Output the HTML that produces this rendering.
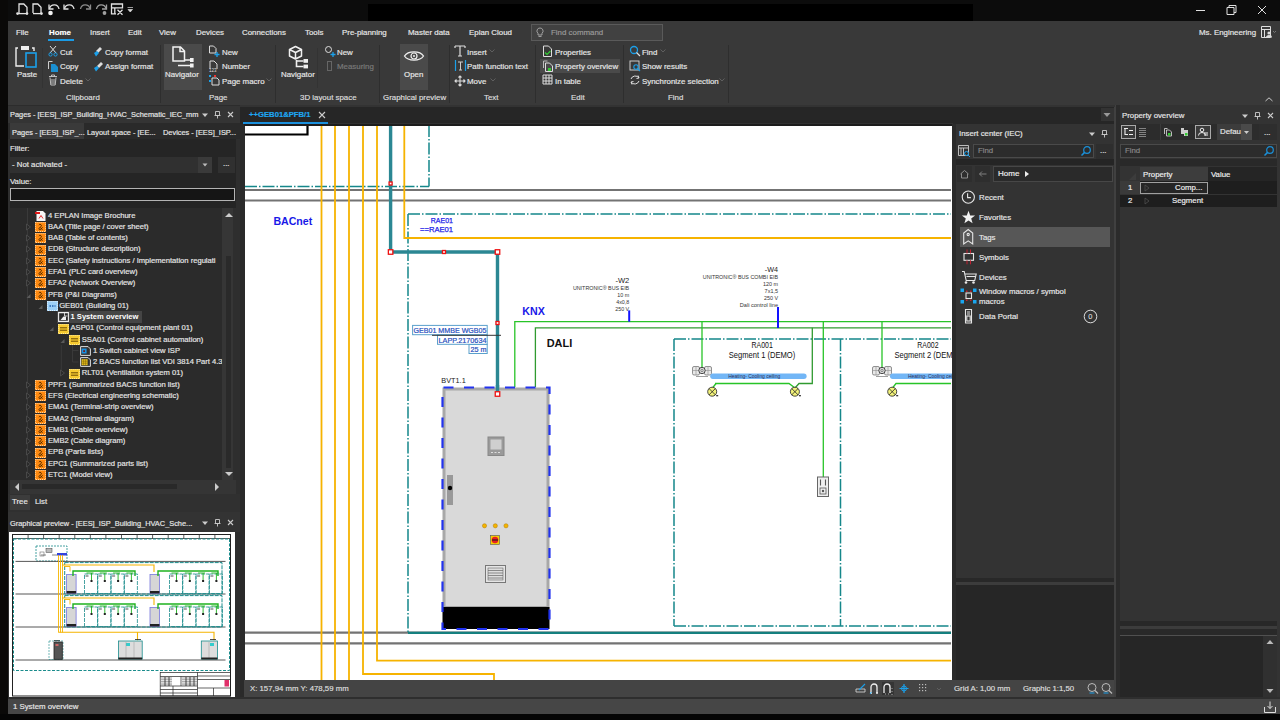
<!DOCTYPE html>
<html><head><meta charset="utf-8">
<style>
*{margin:0;padding:0;box-sizing:border-box}
html,body{width:1280px;height:720px;overflow:hidden;background:#0c0c0c;font-family:"Liberation Sans",sans-serif;font-size:8px;color:#e6e6e6}
.a{position:absolute}
.t{position:absolute;white-space:nowrap;line-height:10px;font-size:7.8px;-webkit-text-stroke:0.18px currentColor}
.tr{font-size:7.9px}
</style></head><body>
<!-- title bar -->
<div class="a" style="left:0;top:0;width:8px;height:720px;background:#0a0908"></div>
<div class="a" style="left:368px;top:4px;width:605px;height:17px;background:#000"></div>
<!-- ribbon -->
<div class="a" id="ribbon" style="left:8px;top:21px;width:1272px;height:84px;background:#393939"></div>
<div class="a" style="left:8px;top:105px;width:1272px;height:592px;background:#2a2a2a"></div>

<!-- title bar icons -->
<svg class="a" style="left:0;top:0" width="1280" height="21" viewBox="0 0 1280 21">
<g fill="none" stroke="#e2e2e2" stroke-width="1.3">
<path d="M19 13V4h4.8l3.2 3.2V13"/><path d="M17.5 13.6h9.5"/>
<path d="M33 13V4h4.8l3.2 3.2V13"/><path d="M33 13.6h8.5"/>
<path d="M49.5 8.5C51 3.5 58 3.5 59 9"/><path d="M49 4.5v4.5h4.5"/>
<path d="M64.5 8.5C66 3.5 73 3.5 74 9"/><path d="M64 4.5v4.5h4.5"/>
<path d="M90 8.5C88.5 3.5 81.5 3.5 80.5 9" stroke="#8c8c8c"/><path d="M90.5 4.5v4.5H86" stroke="#8c8c8c"/>
<path d="M106 8.5C104.5 3.5 97.5 3.5 96.5 9" stroke="#a0a0a0"/><path d="M106.5 4.5v4.5H102" stroke="#a0a0a0"/>
<path d="M111.5 4h11v3.8h-11zM111.5 7.8v6h4.5M114.8 7.8v6M117.5 9.8l5 5M122.5 9.8l-5 5"/>
</g>
<circle cx="17.5" cy="13.6" r="1.3" fill="#e2e2e2"/><circle cx="27" cy="13.6" r="1.3" fill="#e2e2e2"/><circle cx="41.5" cy="13.6" r="1.3" fill="#e2e2e2"/>
<circle cx="50.5" cy="13" r="2.3" fill="#f2f2f2"/><circle cx="104.5" cy="13" r="1.9" fill="#a0a0a0"/>
<path d="M127.5 7.5h5.5M128 9.5h4.5l-2.25 2.5z" fill="#d8d8d8" stroke="#d8d8d8" stroke-width=".7"/>
<g stroke="#e0e0e0" stroke-width="1" fill="none">
<path d="M1196 10.5h9"/><path d="M1227 7.5h7v7h-7z M1229 7.5v-2h7v7h-2"/><path d="M1258 6l8 8M1266 6l-8 8"/>
</g>
</svg>
<div class="a" style="left:8px;top:697px;width:1272px;height:1.5px;background:#2e2e2e"></div><div class="a" style="left:8px;top:698.5px;width:1272px;height:16px;background:#464646"></div>
<div class="a" style="left:0;top:714px;width:1280px;height:6px;background:#050505"></div>
<!-- ribbon menu -->
<div class="t tr" style="left:16px;top:28px">File</div>
<div class="t tr" style="left:49px;top:28px;font-weight:bold;color:#fff">Home</div>
<div class="a" style="left:48px;top:39px;width:26px;height:2px;background:#1a9be6"></div>
<div class="t tr" style="left:90px;top:28px">Insert</div>
<div class="t tr" style="left:128px;top:28px">Edit</div>
<div class="t tr" style="left:159px;top:28px">View</div>
<div class="t tr" style="left:196px;top:28px">Devices</div>
<div class="t tr" style="left:242px;top:28px">Connections</div>
<div class="t tr" style="left:305px;top:28px">Tools</div>
<div class="t tr" style="left:342px;top:28px">Pre-planning</div>
<div class="t tr" style="left:408px;top:28px">Master data</div>
<div class="t tr" style="left:469px;top:28px">Eplan Cloud</div>
<div class="a" style="left:531px;top:24px;width:132px;height:17px;background:#414141;border:1px solid #5a5a5a"></div>
<svg class="a" style="left:535px;top:27px" width="10" height="11"><path d="M5 1a3 3 0 0 1 2 5.3V8H3V6.3A3 3 0 0 1 5 1zM3.5 9.5h3" fill="none" stroke="#aaa" stroke-width="0.9"/></svg>
<div class="t tr" style="left:551px;top:28px;color:#9a9a9a">Find command</div>
<div class="t tr" style="left:1199px;top:28px">Ms. Engineering</div>
<svg class="a" style="left:1260px;top:25px" width="20" height="14"><path d="M1.5 1.5h9v11h-9zM1.5 4.5h9M4.5 4.5v8" fill="none" stroke="#ddd" stroke-width="1"/><circle cx="9" cy="8" r="1.6" fill="#ddd"/><path d="M6 12.5a3 2.5 0 0 1 6 0z" fill="#ddd"/><path d="M13 6l1.5 1.5L16 6" fill="none" stroke="#888" stroke-width=".8"/></svg>
<svg class="a" style="left:1264px;top:96px" width="10" height="7"><path d="M1.5 5L5 1.8 8.5 5" fill="none" stroke="#ccc" stroke-width="1"/></svg>
<!-- group separators -->
<div class="a" style="left:160px;top:45px;width:1px;height:58px;background:#2e2e2e"></div>
<div class="a" style="left:275px;top:45px;width:1px;height:58px;background:#2e2e2e"></div>
<div class="a" style="left:379px;top:45px;width:1px;height:58px;background:#2e2e2e"></div>
<div class="a" style="left:449px;top:45px;width:1px;height:58px;background:#2e2e2e"></div>
<div class="a" style="left:535px;top:45px;width:1px;height:58px;background:#2e2e2e"></div>
<div class="a" style="left:623px;top:45px;width:1px;height:58px;background:#2e2e2e"></div>
<div class="a" style="left:728px;top:45px;width:1px;height:58px;background:#2e2e2e"></div>
<div class="a" style="left:42px;top:48px;width:1px;height:40px;background:#333"></div>
<div class="a" style="left:317px;top:48px;width:1px;height:40px;background:#333"></div>
<!-- highlighted large buttons -->
<div class="a" style="left:164px;top:44px;width:38px;height:46px;background:#4a4a4a"></div>
<div class="a" style="left:400px;top:44px;width:28px;height:46px;background:#4a4a4a"></div>
<div class="a" style="left:540px;top:59px;width:80px;height:14px;background:#4a4a4a"></div>
<!-- clipboard -->
<svg class="a" style="left:14px;top:45px" width="26" height="25"><path d="M4 3H2v18h8" fill="none" stroke="#eee" stroke-width="1.4"/><path d="M7 1h8v4H7z" fill="#eee"/><path d="M18 3h2v3" fill="none" stroke="#eee" stroke-width="1.4"/><rect x="12" y="8" width="10" height="14" fill="none" stroke="#1ba0ea" stroke-width="1.6"/></svg>
<div class="t tr" style="left:17px;top:70px">Paste</div>
<svg class="a" style="left:48px;top:45px" width="10" height="12"><path d="M2 1l6 7M8 1L2 8" stroke="#ddd" stroke-width="1" fill="none"/><circle cx="2.5" cy="9.5" r="1.6" fill="none" stroke="#1ba0ea"/><circle cx="7.5" cy="9.5" r="1.6" fill="none" stroke="#1ba0ea"/></svg>
<div class="t tr" style="left:60px;top:47.5px">Cut</div>
<svg class="a" style="left:47px;top:60px" width="12" height="12"><path d="M1.5 9V1.5h4" fill="none" stroke="#ccc" stroke-width="1"/><path d="M4 4h4l3 3v5H4z" fill="#1a8fd0"/></svg>
<div class="t tr" style="left:60px;top:62px">Copy</div>
<svg class="a" style="left:48px;top:74px" width="10" height="12"><path d="M1 2.5h8M3.5 2.5V1h3v1.5M2 3.5l.8 7.5h4.4L8 3.5M4 5v5M6 5v5" fill="none" stroke="#ccc" stroke-width="0.9"/></svg>
<div class="t tr" style="left:60px;top:76.5px">Delete</div>
<svg class="a" style="left:85px;top:78px" width="6" height="4"><path d="M.5 .5L3 3 5.5 .5" fill="none" stroke="#6a6a6a" stroke-width=".8"/></svg>
<svg class="a" style="left:93px;top:46px" width="11" height="11"><path d="M3 5l4-4 2 2-4 4z" fill="#ddd"/><path d="M1 7l3-2 2 2-3 3.5z" fill="#1ba0ea"/></svg>
<div class="t tr" style="left:105px;top:47.5px">Copy format</div>
<svg class="a" style="left:93px;top:61px" width="11" height="11"><path d="M4 5l4-4 2 2-4 4z" fill="#ddd"/><path d="M1 7l3-2 2 2-3 3.5z" fill="#1ba0ea"/></svg>
<div class="t tr" style="left:105px;top:62px">Assign format</div>
<div class="t tr" style="left:66px;top:93px;color:#ddd">Clipboard</div>
<!-- page -->
<svg class="a" style="left:170px;top:45px" width="26" height="24"><path d="M3 2h7.5l4 4v10H3z M10 2v4.5h4.5" fill="none" stroke="#f2f2f2" stroke-width="1.5"/><path d="M15 15h5.5M8 20.5h12.5" stroke="#f2f2f2" stroke-width="1.4"/><rect x="20" y="13" width="3.6" height="4" fill="#f2f2f2"/><rect x="20" y="18.5" width="3.6" height="4" fill="#f2f2f2"/></svg>
<div class="t tr" style="left:165px;top:70px">Navigator</div>
<svg class="a" style="left:208px;top:45px" width="12" height="12"><path d="M1.5 1h4l2.5 2.5V8H1.5z" fill="none" stroke="#ddd" stroke-width="1"/><path d="M9 7v5M6.5 9.5h5" stroke="#1ba0ea" stroke-width="1.3"/></svg>
<div class="t tr" style="left:222px;top:47.5px">New</div>
<svg class="a" style="left:208px;top:60px" width="12" height="12"><path d="M2 9V1h4l3 3v5" fill="none" stroke="#ddd" stroke-width="1"/><text x="1" y="12" font-size="4.5" fill="#ddd" font-family="Liberation Sans">123</text></svg>
<div class="t tr" style="left:222px;top:62px">Number</div>
<svg class="a" style="left:208px;top:74px" width="12" height="12"><rect x="1" y="1" width="2" height="2" fill="#1ba0ea"/><rect x="6" y="1" width="2" height="2" fill="#e33"/><rect x="1" y="6" width="2" height="2" fill="#1ba0ea"/><path d="M4 4h5l2 2v5H4z" fill="none" stroke="#ddd" stroke-width="1"/></svg>
<div class="t tr" style="left:222px;top:76.5px">Page macro</div>
<svg class="a" style="left:266px;top:78px" width="6" height="4"><path d="M.5 .5L3 3 5.5 .5" fill="none" stroke="#6a6a6a" stroke-width=".8"/></svg>
<div class="t tr" style="left:209px;top:93px;color:#ddd">Page</div>
<!-- 3d layout -->
<svg class="a" style="left:287px;top:45px" width="24" height="24"><path d="M8.5 1.5l6 3v6.5l-6 3-6-3V4.5z M2.5 4.5l6 3 6-3M8.5 7.5v6.5" fill="none" stroke="#f0f0f0" stroke-width="1.5" stroke-linejoin="round"/><path d="M9.5 16h7M9.5 15v6.5h7" fill="none" stroke="#f0f0f0" stroke-width="1.6"/><rect x="16.5" y="14" width="4.5" height="3.8" fill="#f0f0f0"/><rect x="16.5" y="19.6" width="4.5" height="3.8" fill="#f0f0f0"/></svg>
<div class="t tr" style="left:281px;top:70px">Navigator</div>
<svg class="a" style="left:324px;top:45px" width="12" height="12"><circle cx="4.5" cy="4.5" r="3" fill="none" stroke="#ddd" stroke-width="1"/><path d="M9 7v5M6.5 9.5h5" stroke="#1ba0ea" stroke-width="1.3"/></svg>
<div class="t tr" style="left:337px;top:47.5px">New</div>
<svg class="a" style="left:326px;top:60px" width="8" height="12"><rect x="1.5" y="1.5" width="4" height="9" fill="none" stroke="#666" stroke-width="1"/></svg>
<div class="t tr" style="left:337px;top:62px;color:#7a7a7a">Measuring</div>
<div class="t tr" style="left:300px;top:93px;color:#ddd">3D layout space</div>
<!-- graphical preview -->
<svg class="a" style="left:403px;top:48px" width="22" height="16"><path d="M1.5 8C5 2.5 17 2.5 20.5 8 17 13.5 5 13.5 1.5 8z" fill="none" stroke="#eee" stroke-width="1.3"/><circle cx="11" cy="8" r="3" fill="none" stroke="#eee" stroke-width="1.2"/><circle cx="11" cy="8" r="1" fill="#eee"/></svg>
<div class="t tr" style="left:404px;top:70px">Open</div>
<div class="t tr" style="left:383px;top:93px;color:#ddd">Graphical preview</div>
<!-- text -->
<svg class="a" style="left:453px;top:44px" width="14" height="14"><path d="M2 2h10M7 2v10M5 12h4M2 2v2M12 2v2" fill="none" stroke="#ddd" stroke-width="1.2"/></svg>
<div class="t tr" style="left:467px;top:47.5px">Insert</div>
<svg class="a" style="left:489px;top:49px" width="6" height="4"><path d="M.5 .5L3 3 5.5 .5" fill="none" stroke="#6a6a6a" stroke-width=".8"/></svg>
<svg class="a" style="left:454px;top:59px" width="13" height="13"><path d="M1.5 1v11M11.5 1v11" stroke="#1ba0ea" stroke-width="1.2"/><path d="M4 3h5M6.5 3v8M5 11h3" fill="none" stroke="#ccc" stroke-width="1"/></svg>
<div class="t tr" style="left:467px;top:62px">Path function text</div>
<svg class="a" style="left:454px;top:74.5px" width="12" height="12"><path d="M6 1v10M1 6h10M4.5 2.5L6 1l1.5 1.5M4.5 9.5L6 11l1.5-1.5M2.5 4.5L1 6l1.5 1.5M9.5 4.5L11 6 9.5 7.5" fill="none" stroke="#ddd" stroke-width="1.1"/></svg>
<div class="t tr" style="left:467px;top:76.5px">Move</div>
<svg class="a" style="left:490px;top:78px" width="6" height="4"><path d="M.5 .5L3 3 5.5 .5" fill="none" stroke="#6a6a6a" stroke-width=".8"/></svg>
<div class="t tr" style="left:484px;top:93px;color:#ddd">Text</div>
<!-- edit -->
<svg class="a" style="left:542px;top:45px" width="11" height="12"><path d="M1.5 1h5l3 3v7.5h-8z" fill="none" stroke="#ddd" stroke-width="1"/><path d="M3 7.5l2 2 3.5-3.5" fill="none" stroke="#3c3" stroke-width="1.2"/></svg>
<div class="t tr" style="left:555px;top:47.5px">Properties</div>
<svg class="a" style="left:542px;top:60px" width="12" height="12"><path d="M1.5 8V1h4" fill="none" stroke="#bbb" stroke-width="1"/><path d="M3.5 3h4l3 3v5.5h-7z" fill="none" stroke="#ddd" stroke-width="1"/><rect x="6" y="8" width="3" height="3" fill="#3c3"/></svg>
<div class="t tr" style="left:555px;top:62px">Property overview</div>
<svg class="a" style="left:542px;top:74px" width="11" height="11"><path d="M1 1h9v9H1zM1 4h9M1 7h9M4 1v9M7 1v9" fill="none" stroke="#ddd" stroke-width="1"/></svg>
<div class="t tr" style="left:555px;top:76.5px">In table</div>
<div class="t tr" style="left:571px;top:93px;color:#ddd">Edit</div>
<!-- find -->
<svg class="a" style="left:629px;top:45px" width="12" height="12"><circle cx="5" cy="5" r="3.5" fill="none" stroke="#1ba0ea" stroke-width="1.3"/><path d="M7.5 7.5l3.5 3.5" stroke="#ddd" stroke-width="1.3"/></svg>
<div class="t tr" style="left:642px;top:47.5px">Find</div>
<svg class="a" style="left:660px;top:49px" width="6" height="4"><path d="M.5 .5L3 3 5.5 .5" fill="none" stroke="#6a6a6a" stroke-width=".8"/></svg>
<svg class="a" style="left:629px;top:60px" width="12" height="12"><rect x="1" y="1" width="9" height="9" fill="none" stroke="#ccc" stroke-width="1"/><circle cx="7" cy="7" r="2.2" fill="none" stroke="#1ba0ea" stroke-width="1.1"/><path d="M8.5 8.5l2.5 2.5" stroke="#1ba0ea" stroke-width="1.1"/></svg>
<div class="t tr" style="left:642px;top:62px">Show results</div>
<svg class="a" style="left:629px;top:74px" width="12" height="12"><path d="M2 5a4.5 4.5 0 0 1 8-1M10 7a4.5 4.5 0 0 1-8 1M9 1.5l1 2.5-2.5.5M3 10.5L2 8l2.5-.5" fill="none" stroke="#ddd" stroke-width="1"/></svg>
<div class="t tr" style="left:642px;top:76.5px">Synchronize selection</div>
<svg class="a" style="left:719px;top:78px" width="6" height="4"><path d="M.5 .5L3 3 5.5 .5" fill="none" stroke="#6a6a6a" stroke-width=".8"/></svg>
<div class="t tr" style="left:668px;top:93px;color:#ddd">Find</div>

<!-- left panel -->
<div class="a" style="left:8px;top:105px;width:232px;height:592px;background:#2e2e2e"></div>
<div class="a" style="left:8px;top:105px;width:232px;height:18px;background:#343434"></div>
<div class="a" style="left:8px;top:105px;width:232px;height:1px;background:#2c2c2c"></div>
<div class="a" style="left:8px;top:123px;width:232px;height:16px;background:#2a2a2a"></div>
<div class="a" style="left:10px;top:123px;width:74px;height:16px;background:#3a3a3a"></div>
<div class="a" style="left:10px;top:139px;width:226px;height:69px;background:#252525"></div>
<div class="a" style="left:10px;top:208px;width:226px;height:272px;background:#2b2b2b"></div>
<div class="a" style="left:10px;top:480px;width:226px;height:14px;background:#353535"></div>
<div class="a" style="left:8px;top:494px;width:232px;height:18px;background:#303030"></div>
<div class="a" style="left:8px;top:512px;width:232px;height:20px;background:#333"></div>
<!--PREV--><svg class="a" style="left:9px;top:532px" width="226" height="165" viewBox="9 532 226 165">
<rect x="9" y="532" width="226" height="165" fill="#fff"/>
<rect x="12.5" y="534.5" width="218" height="161.5" fill="none" stroke="#222" stroke-width="1"/>
<path d="M12.5 538.5h218" stroke="#333" stroke-width=".8"/>
<path d="M28.1 534.5v4M43.6 534.5v4M59.2 534.5v4M74.8 534.5v4M90.3 534.5v4M105.9 534.5v4M121.5 534.5v4M137.1 534.5v4M152.6 534.5v4M168.2 534.5v4M183.8 534.5v4M199.3 534.5v4M214.9 534.5v4" stroke="#333" stroke-width=".8"/>
<rect x="13.5" y="539" width="216" height="131.5" fill="none" stroke="#1a8c8c" stroke-width="1" stroke-dasharray="3 1.5"/>
<rect x="36" y="546" width="31" height="15" fill="none" stroke="#1a8c8c" stroke-width=".8" stroke-dasharray="2 1"/>
<rect x="46" y="548.5" width="6" height="4" fill="#bbb" stroke="#444" stroke-width=".5"/><path d="M41 555h5M52 555h5" stroke="#333" stroke-width=".6"/><rect x="40" y="552" width="4" height="4" fill="none" stroke="#555" stroke-width=".5"/>
<rect x="57" y="553" width="10" height="2.5" fill="#3344dd"/>
<path d="M15.5 561.4h210" stroke="#444" stroke-width=".9"/>
<path d="M15.5 594h210" stroke="#444" stroke-width=".9"/>
<path d="M15.5 627h210" stroke="#444" stroke-width=".9"/>
<path d="M15.5 660h210" stroke="#444" stroke-width=".9"/>
<path d="M58.5 555v77.5M60.5 555v77.5M62.5 555v77.5" stroke="#f5b400" stroke-width=".9"/>
<rect x="64.7" y="562.6" width="157.3" height="31.4" fill="none" stroke="#1a8c8c" stroke-width="1" stroke-dasharray="4 1"/>
<path d="M62 565h92v7" fill="none" stroke="#f5b400" stroke-width="1.1"/>
<path d="M64 566.5h6v5" fill="none" stroke="#f5b400" stroke-width=".9"/>
<rect x="66.6" y="574.5" width="9.5" height="19" fill="#d6d6d6" stroke="#7777dd" stroke-width=".8"/><rect x="66.6" y="591" width="9.5" height="2.5" fill="#222"/>
<rect x="150" y="574.5" width="9.5" height="19" fill="#d6d6d6" stroke="#7777dd" stroke-width=".8"/><rect x="150" y="591" width="9.5" height="2.5" fill="#222"/>
<path d="M73 576v-5h62v5" fill="none" stroke="#1fb21f" stroke-width="1.4"/>
<rect x="84.5" y="574" width="13" height="19.5" fill="none" stroke="#1a8c8c" stroke-width=".8" stroke-dasharray="4 1"/>
<path d="M86.5 573h7M91.5 573v8" stroke="#1fb21f" stroke-width=".9" fill="none"/><rect x="90.5" y="580" width="2" height="2" fill="#222"/><path d="M85.5 576h3" stroke="#222" stroke-width=".8"/>
<rect x="97.8" y="574" width="13" height="19.5" fill="none" stroke="#1a8c8c" stroke-width=".8" stroke-dasharray="4 1"/>
<path d="M99.8 573h7M104.8 573v8" stroke="#1fb21f" stroke-width=".9" fill="none"/><rect x="103.8" y="580" width="2" height="2" fill="#222"/><path d="M98.8 576h3" stroke="#222" stroke-width=".8"/>
<rect x="111.1" y="574" width="13" height="19.5" fill="none" stroke="#1a8c8c" stroke-width=".8" stroke-dasharray="4 1"/>
<path d="M113.1 573h7M118.1 573v8" stroke="#1fb21f" stroke-width=".9" fill="none"/><rect x="117.1" y="580" width="2" height="2" fill="#222"/><path d="M112.1 576h3" stroke="#222" stroke-width=".8"/>
<rect x="124.4" y="574" width="13" height="19.5" fill="none" stroke="#1a8c8c" stroke-width=".8" stroke-dasharray="4 1"/>
<path d="M126.4 573h7M131.4 573v8" stroke="#1fb21f" stroke-width=".9" fill="none"/><rect x="130.4" y="580" width="2" height="2" fill="#222"/><path d="M125.4 576h3" stroke="#222" stroke-width=".8"/>
<path d="M158 576v-5h60v5" fill="none" stroke="#1fb21f" stroke-width="1.4"/>
<rect x="169.5" y="574" width="13" height="19.5" fill="none" stroke="#1a8c8c" stroke-width=".8" stroke-dasharray="4 1"/>
<path d="M171.5 573h7M176.5 573v8" stroke="#1fb21f" stroke-width=".9" fill="none"/><rect x="175.5" y="580" width="2" height="2" fill="#222"/><path d="M170.5 576h3" stroke="#222" stroke-width=".8"/>
<rect x="182.8" y="574" width="13" height="19.5" fill="none" stroke="#1a8c8c" stroke-width=".8" stroke-dasharray="4 1"/>
<path d="M184.8 573h7M189.8 573v8" stroke="#1fb21f" stroke-width=".9" fill="none"/><rect x="188.8" y="580" width="2" height="2" fill="#222"/><path d="M183.8 576h3" stroke="#222" stroke-width=".8"/>
<rect x="196.1" y="574" width="13" height="19.5" fill="none" stroke="#1a8c8c" stroke-width=".8" stroke-dasharray="4 1"/>
<path d="M198.1 573h7M203.1 573v8" stroke="#1fb21f" stroke-width=".9" fill="none"/><rect x="202.1" y="580" width="2" height="2" fill="#222"/><path d="M197.1 576h3" stroke="#222" stroke-width=".8"/>
<rect x="209.4" y="574" width="13" height="19.5" fill="none" stroke="#1a8c8c" stroke-width=".8" stroke-dasharray="4 1"/>
<path d="M211.4 573h7M216.4 573v8" stroke="#1fb21f" stroke-width=".9" fill="none"/><rect x="215.4" y="580" width="2" height="2" fill="#222"/><path d="M210.4 576h3" stroke="#222" stroke-width=".8"/>
<rect x="64.7" y="595.6" width="157.3" height="31.4" fill="none" stroke="#1a8c8c" stroke-width="1" stroke-dasharray="4 1"/>
<path d="M62 598h92v7" fill="none" stroke="#f5b400" stroke-width="1.1"/>
<path d="M64 599.5h6v5" fill="none" stroke="#f5b400" stroke-width=".9"/>
<rect x="66.6" y="607.5" width="9.5" height="19" fill="#d6d6d6" stroke="#7777dd" stroke-width=".8"/><rect x="66.6" y="624" width="9.5" height="2.5" fill="#222"/>
<rect x="150" y="607.5" width="9.5" height="19" fill="#d6d6d6" stroke="#7777dd" stroke-width=".8"/><rect x="150" y="624" width="9.5" height="2.5" fill="#222"/>
<path d="M73 609v-5h62v5" fill="none" stroke="#1fb21f" stroke-width="1.4"/>
<rect x="84.5" y="607" width="13" height="19.5" fill="none" stroke="#1a8c8c" stroke-width=".8" stroke-dasharray="4 1"/>
<path d="M86.5 606h7M91.5 606v8" stroke="#1fb21f" stroke-width=".9" fill="none"/><rect x="90.5" y="613" width="2" height="2" fill="#222"/><path d="M85.5 609h3" stroke="#222" stroke-width=".8"/>
<rect x="97.8" y="607" width="13" height="19.5" fill="none" stroke="#1a8c8c" stroke-width=".8" stroke-dasharray="4 1"/>
<path d="M99.8 606h7M104.8 606v8" stroke="#1fb21f" stroke-width=".9" fill="none"/><rect x="103.8" y="613" width="2" height="2" fill="#222"/><path d="M98.8 609h3" stroke="#222" stroke-width=".8"/>
<rect x="111.1" y="607" width="13" height="19.5" fill="none" stroke="#1a8c8c" stroke-width=".8" stroke-dasharray="4 1"/>
<path d="M113.1 606h7M118.1 606v8" stroke="#1fb21f" stroke-width=".9" fill="none"/><rect x="117.1" y="613" width="2" height="2" fill="#222"/><path d="M112.1 609h3" stroke="#222" stroke-width=".8"/>
<rect x="124.4" y="607" width="13" height="19.5" fill="none" stroke="#1a8c8c" stroke-width=".8" stroke-dasharray="4 1"/>
<path d="M126.4 606h7M131.4 606v8" stroke="#1fb21f" stroke-width=".9" fill="none"/><rect x="130.4" y="613" width="2" height="2" fill="#222"/><path d="M125.4 609h3" stroke="#222" stroke-width=".8"/>
<path d="M158 609v-5h60v5" fill="none" stroke="#1fb21f" stroke-width="1.4"/>
<rect x="169.5" y="607" width="13" height="19.5" fill="none" stroke="#1a8c8c" stroke-width=".8" stroke-dasharray="4 1"/>
<path d="M171.5 606h7M176.5 606v8" stroke="#1fb21f" stroke-width=".9" fill="none"/><rect x="175.5" y="613" width="2" height="2" fill="#222"/><path d="M170.5 609h3" stroke="#222" stroke-width=".8"/>
<rect x="182.8" y="607" width="13" height="19.5" fill="none" stroke="#1a8c8c" stroke-width=".8" stroke-dasharray="4 1"/>
<path d="M184.8 606h7M189.8 606v8" stroke="#1fb21f" stroke-width=".9" fill="none"/><rect x="188.8" y="613" width="2" height="2" fill="#222"/><path d="M183.8 609h3" stroke="#222" stroke-width=".8"/>
<rect x="196.1" y="607" width="13" height="19.5" fill="none" stroke="#1a8c8c" stroke-width=".8" stroke-dasharray="4 1"/>
<path d="M198.1 606h7M203.1 606v8" stroke="#1fb21f" stroke-width=".9" fill="none"/><rect x="202.1" y="613" width="2" height="2" fill="#222"/><path d="M197.1 609h3" stroke="#222" stroke-width=".8"/>
<rect x="209.4" y="607" width="13" height="19.5" fill="none" stroke="#1a8c8c" stroke-width=".8" stroke-dasharray="4 1"/>
<path d="M211.4 606h7M216.4 606v8" stroke="#1fb21f" stroke-width=".9" fill="none"/><rect x="215.4" y="613" width="2" height="2" fill="#222"/><path d="M210.4 609h3" stroke="#222" stroke-width=".8"/>
<path d="M58.5 632.3h155.5v8M137.5 632.3v8" fill="none" stroke="#f5b400" stroke-width="1.1"/>
<path d="M54 640.5h6M135 639.5h6M210 639.5h6" stroke="#222" stroke-width=".8"/>
<rect x="49" y="641" width="14" height="18.5" fill="none" stroke="#1a8c8c" stroke-width=".6" stroke-dasharray="2 1"/>
<rect x="54" y="642" width="8.3" height="17.3" fill="#555" stroke="#222" stroke-width=".8"/><rect x="55.5" y="644" width="3" height="2" fill="#c66"/>
<rect x="118.4" y="641" width="23.8" height="18" fill="#ddd" stroke="#1a8c8c" stroke-width=".8"/><rect x="126" y="643" width="4" height="3" fill="#3cc"/><path d="M126 642v16M134 642v16" stroke="#999" stroke-width=".5"/><rect x="118.4" y="657.5" width="23.8" height="2" fill="#222"/>
<rect x="201.3" y="641" width="16.2" height="18" fill="#ddd" stroke="#1a8c8c" stroke-width=".8"/><rect x="210" y="643" width="4" height="3" fill="#3cc"/><path d="M209 642v16" stroke="#999" stroke-width=".5"/><rect x="201.3" y="657.5" width="16.2" height="2" fill="#222"/>
<g stroke="#222" stroke-width=".7" fill="none"><rect x="160.2" y="672.4" width="70.4" height="23.6"/><path d="M197.5 672.4v23.6M197.5 676h33M197.5 679.5h33M197.5 688h33M160.2 676.5h37M160.2 686h37M160.2 689.5h37M160.2 693h37M173 686v10M181 676.5v9.5M213.5 688v8"/></g>
<path d="M161 678h11M161 679.7h11M161 681.4h11M161 683.1h11M161 684.8h11M182 678h15M182 679.7h15M182 681.4h15M182 683.1h15M182 684.8h15" stroke="#444" stroke-width=".5"/>
<path d="M165 677v9M169 677v9M186 677v9M190 677v9M194 677v9" stroke="#333" stroke-width=".9"/>
<rect x="224.5" y="680" width="4.5" height="6.5" fill="#e0306a"/>
</svg><!--/PREV-->

<div class="t" style="left:10px;top:110px;font-size:7.4px">Pages - [EES]_ISP_Building_HVAC_Schematic_IEC_mm</div>
<svg class="a" style="left:200px;top:109px" width="38" height="12"><path d="M2 4.5h6L5 8z" fill="#ccc"/><path d="M15.5 2.5h4v4h-4zM14.5 6.5h6M17.5 6.5v3" fill="none" stroke="#ccc" stroke-width=".9"/><path d="M28 3l5 5M33 3l-5 5" stroke="#ccc" stroke-width="1.1"/></svg>
<div class="t" style="left:12px;top:127.5px;font-size:7.4px">Pages - [EES]_ISP_...</div>
<div class="t" style="left:87px;top:127.5px;font-size:7.4px">Layout space - [EE...</div>
<div class="t" style="left:163px;top:127.5px;font-size:7.4px">Devices - [EES]_ISP...</div>
<div class="t" style="left:10px;top:144px">Filter:</div>
<div class="a" style="left:10px;top:157px;width:202px;height:16px;background:#303030"></div>
<div class="a" style="left:198px;top:157px;width:14px;height:16px;background:#3a3a3a"></div>
<svg class="a" style="left:201px;top:162px" width="8" height="6"><path d="M1.5 1.5h5L4 4.5z" fill="#bbb"/></svg>
<div class="t" style="left:12px;top:160px">- Not activated -</div>
<div class="a" style="left:218px;top:157px;width:17px;height:16px;background:#303030"></div>
<div class="t" style="left:223px;top:159px">...</div>
<div class="t" style="left:10px;top:176.5px">Value:</div>
<div class="a" style="left:10px;top:188px;width:225px;height:13px;background:#151515;border:1px solid #b4b4b4"></div>
<!-- v scrollbar -->
<div class="a" style="left:222px;top:208px;width:11px;height:272px;background:#363636"></div><div class="a" style="left:233px;top:208px;width:3px;height:272px;background:#2e2e2e"></div>
<div class="a" style="left:226px;top:256px;width:5px;height:212px;background:#2a2a2a"></div>
<svg class="a" style="left:224px;top:211px" width="10" height="8"><path d="M1 6h8L5 2z" fill="#ccc"/></svg>
<svg class="a" style="left:224px;top:470px" width="10" height="8"><path d="M1 2h8L5 6z" fill="#ccc"/></svg>
<!-- h scrollbar -->
<div class="a" style="left:22px;top:484px;width:155px;height:5px;background:#292929"></div>
<svg class="a" style="left:13px;top:482px" width="8" height="10"><path d="M6 1v8L2 5z" fill="#ccc"/></svg>
<svg class="a" style="left:213px;top:482px" width="8" height="10"><path d="M2 1v8l4-4z" fill="#ccc"/></svg>
<!-- tree/list -->
<div class="a" style="left:10px;top:495px;width:20px;height:15px;background:#3c3c3c"></div>
<div class="t" style="left:12px;top:497px">Tree</div>
<div class="t" style="left:35px;top:497px">List</div>
<div class="t" style="left:10px;top:518.5px;font-size:7.4px">Graphical preview - [EES]_ISP_Building_HVAC_Sche...</div>
<svg class="a" style="left:200px;top:517px" width="38" height="12"><path d="M2 4.5h6L5 8z" fill="#ccc"/><path d="M15.5 2.5h4v4h-4zM14.5 6.5h6M17.5 6.5v3" fill="none" stroke="#ccc" stroke-width=".9"/><path d="M28 3l5 5M33 3l-5 5" stroke="#ccc" stroke-width="1.1"/></svg>
<div class="t" style="left:13px;top:702px">1 System overview</div>
<div class="a" style="left:10px;top:208px;width:212px;height:272px;overflow:hidden">
<svg class="a" style="left:0;top:0" width="212" height="272"><g stroke="#3a3a3a" stroke-width="1"><path d="M17.5 0v267M51.3 137v28M62.5 137v17M62.5 142.5h6M62.5 154h6"/></g></svg>
<svg class="a" style="left:25.3px;top:2.7px" width="11" height="10"><path d="M1.5 0h6.5l2.5 2.5V10H1.5z" fill="#f6f6f6"/><path d="M0 1h5v2H0z" fill="#e01818"/><path d="M4 7.5l2-3 2 3" fill="none" stroke="#e01818" stroke-width=".9"/></svg>
<div class="t" style="font-size:7.6px;left:38.0px;top:2.5px;">4 EPLAN Image Brochure</div>
<svg class="a" style="left:25.3px;top:14.0px" width="11" height="10"><rect x="0" y="0" width="11" height="10" fill="#ff8a10"/><rect x=".4" y=".4" width="10.2" height="9.2" fill="none" stroke="#fff3d8" stroke-width=".8" stroke-dasharray="1 1"/><path d="M4 3.2a1.2 1.2 0 1 1 1.8 1.4L4 6.5a1 1 0 0 0 1.6 1l2-2.2M5.3 5.5l2.2 2.3" fill="none" stroke="#4a2800" stroke-width="1"/></svg>
<div class="t" style="font-size:7.6px;left:38.0px;top:13.8px;">BAA (Title page / cover sheet)</div>
<svg class="a" style="left:15.3px;top:14.8px" width="7" height="8"><path d="M1.5 1v6l4-3z" fill="#2b2b2b" stroke="#555" stroke-width=".7"/></svg>
<svg class="a" style="left:25.3px;top:25.3px" width="11" height="10"><rect x="0" y="0" width="11" height="10" fill="#ff8a10"/><rect x=".4" y=".4" width="10.2" height="9.2" fill="none" stroke="#fff3d8" stroke-width=".8" stroke-dasharray="1 1"/><path d="M4 3.2a1.2 1.2 0 1 1 1.8 1.4L4 6.5a1 1 0 0 0 1.6 1l2-2.2M5.3 5.5l2.2 2.3" fill="none" stroke="#4a2800" stroke-width="1"/></svg>
<div class="t" style="font-size:7.6px;left:38.0px;top:25.1px;">BAB (Table of contents)</div>
<svg class="a" style="left:15.3px;top:26.1px" width="7" height="8"><path d="M1.5 1v6l4-3z" fill="#2b2b2b" stroke="#555" stroke-width=".7"/></svg>
<svg class="a" style="left:25.3px;top:36.5px" width="11" height="10"><rect x="0" y="0" width="11" height="10" fill="#ff8a10"/><rect x=".4" y=".4" width="10.2" height="9.2" fill="none" stroke="#fff3d8" stroke-width=".8" stroke-dasharray="1 1"/><path d="M4 3.2a1.2 1.2 0 1 1 1.8 1.4L4 6.5a1 1 0 0 0 1.6 1l2-2.2M5.3 5.5l2.2 2.3" fill="none" stroke="#4a2800" stroke-width="1"/></svg>
<div class="t" style="font-size:7.6px;left:38.0px;top:36.3px;">EDB (Structure description)</div>
<svg class="a" style="left:15.3px;top:37.3px" width="7" height="8"><path d="M1.5 1v6l4-3z" fill="#2b2b2b" stroke="#555" stroke-width=".7"/></svg>
<svg class="a" style="left:25.3px;top:47.8px" width="11" height="10"><rect x="0" y="0" width="11" height="10" fill="#ff8a10"/><rect x=".4" y=".4" width="10.2" height="9.2" fill="none" stroke="#fff3d8" stroke-width=".8" stroke-dasharray="1 1"/><path d="M4 3.2a1.2 1.2 0 1 1 1.8 1.4L4 6.5a1 1 0 0 0 1.6 1l2-2.2M5.3 5.5l2.2 2.3" fill="none" stroke="#4a2800" stroke-width="1"/></svg>
<div class="t" style="font-size:7.6px;left:38.0px;top:47.6px;">EEC (Safety instructions / Implementation regulati</div>
<svg class="a" style="left:15.3px;top:48.6px" width="7" height="8"><path d="M1.5 1v6l4-3z" fill="#2b2b2b" stroke="#555" stroke-width=".7"/></svg>
<svg class="a" style="left:25.3px;top:59.1px" width="11" height="10"><rect x="0" y="0" width="11" height="10" fill="#ff8a10"/><rect x=".4" y=".4" width="10.2" height="9.2" fill="none" stroke="#fff3d8" stroke-width=".8" stroke-dasharray="1 1"/><path d="M4 3.2a1.2 1.2 0 1 1 1.8 1.4L4 6.5a1 1 0 0 0 1.6 1l2-2.2M5.3 5.5l2.2 2.3" fill="none" stroke="#4a2800" stroke-width="1"/></svg>
<div class="t" style="font-size:7.6px;left:38.0px;top:58.9px;">EFA1 (PLC card overview)</div>
<svg class="a" style="left:15.3px;top:59.9px" width="7" height="8"><path d="M1.5 1v6l4-3z" fill="#2b2b2b" stroke="#555" stroke-width=".7"/></svg>
<svg class="a" style="left:25.3px;top:70.4px" width="11" height="10"><rect x="0" y="0" width="11" height="10" fill="#ff8a10"/><rect x=".4" y=".4" width="10.2" height="9.2" fill="none" stroke="#fff3d8" stroke-width=".8" stroke-dasharray="1 1"/><path d="M4 3.2a1.2 1.2 0 1 1 1.8 1.4L4 6.5a1 1 0 0 0 1.6 1l2-2.2M5.3 5.5l2.2 2.3" fill="none" stroke="#4a2800" stroke-width="1"/></svg>
<div class="t" style="font-size:7.6px;left:38.0px;top:70.2px;">EFA2 (Network Overview)</div>
<svg class="a" style="left:15.3px;top:71.2px" width="7" height="8"><path d="M1.5 1v6l4-3z" fill="#2b2b2b" stroke="#555" stroke-width=".7"/></svg>
<svg class="a" style="left:25.3px;top:81.7px" width="11" height="10"><rect x="0" y="0" width="11" height="10" fill="#ff8a10"/><rect x=".4" y=".4" width="10.2" height="9.2" fill="none" stroke="#fff3d8" stroke-width=".8" stroke-dasharray="1 1"/><path d="M4 3.2a1.2 1.2 0 1 1 1.8 1.4L4 6.5a1 1 0 0 0 1.6 1l2-2.2M5.3 5.5l2.2 2.3" fill="none" stroke="#4a2800" stroke-width="1"/></svg>
<div class="t" style="font-size:7.6px;left:38.0px;top:81.5px;">PFB (P&amp;I Diagrams)</div>
<svg class="a" style="left:15.3px;top:82.5px" width="7" height="8"><path d="M5.5 3v4h-4z" fill="#5a5a5a"/></svg>
<svg class="a" style="left:36.5px;top:92.9px" width="11" height="10"><rect x="0" y="0" width="11" height="10" fill="#9cd0f8"/><rect x=".4" y=".4" width="10.2" height="9.2" fill="none" stroke="#fff" stroke-width=".8" stroke-dasharray="1 1"/><path d="M2.5 5h6" stroke="#2060b0" stroke-width="1.4" stroke-dasharray="1.5 1"/></svg>
<div class="t" style="font-size:7.6px;left:49.2px;top:92.7px;">GEB01 (Building 01)</div>
<svg class="a" style="left:26.5px;top:93.7px" width="7" height="8"><path d="M5.5 3v4h-4z" fill="#5a5a5a"/></svg>
<div class="a" style="left:46.8px;top:103.0px;width:85px;height:12px;background:#454545"></div>
<svg class="a" style="left:47.8px;top:104.2px" width="11" height="10"><path d="M.6 .6h9.8v8.8H.6z" fill="#2a2a2a" stroke="#eee" stroke-width="1.1"/><path d="M2.5 8l3-3.5h2.5V8z" fill="#eee"/><path d="M6.5 1v3h3" fill="none" stroke="#eee" stroke-width=".8"/></svg>
<div class="t" style="font-size:7.6px;left:60.5px;top:104.0px;font-weight:bold;color:#fff;-webkit-text-stroke:0;">1 System overview</div>
<svg class="a" style="left:47.8px;top:115.5px" width="11" height="10"><rect x="0" y="0" width="11" height="10" fill="#f6ca30"/><rect x=".4" y=".4" width="10.2" height="9.2" fill="none" stroke="#fff6c8" stroke-width=".8" stroke-dasharray="1 1"/><path d="M2 3.8h7M2 6.2h7" stroke="#6a4800" stroke-width="1"/></svg>
<div class="t" style="font-size:7.6px;left:60.5px;top:115.3px;">ASP01 (Control equipment plant 01)</div>
<svg class="a" style="left:37.8px;top:116.3px" width="7" height="8"><path d="M5.5 3v4h-4z" fill="#5a5a5a"/></svg>
<svg class="a" style="left:59.0px;top:126.8px" width="11" height="10"><rect x="0" y="0" width="11" height="10" fill="#f6ca30"/><rect x=".4" y=".4" width="10.2" height="9.2" fill="none" stroke="#fff6c8" stroke-width=".8" stroke-dasharray="1 1"/><path d="M2 3.8h7M2 6.2h7" stroke="#6a4800" stroke-width="1"/></svg>
<div class="t" style="font-size:7.6px;left:71.8px;top:126.6px;">SSA01 (Control cabinet automation)</div>
<svg class="a" style="left:49.0px;top:127.6px" width="7" height="8"><path d="M5.5 3v4h-4z" fill="#5a5a5a"/></svg>
<svg class="a" style="left:70.3px;top:138.1px" width="11" height="10"><path d="M.6 .6h7.5l2.3 2.3v6.5H.6z" fill="#333" stroke="#ddd" stroke-width="1"/><rect x="1.6" y="2.5" width="5" height="5" fill="#1a8fe0"/><rect x="3.2" y="4.2" width="1.8" height="1.8" fill="#702020"/></svg>
<div class="t" style="font-size:7.6px;left:83.0px;top:137.9px;">1 Switch cabinet view ISP</div>
<svg class="a" style="left:70.3px;top:149.3px" width="11" height="10"><path d="M.6 .6h7.5l2.3 2.3v6.5H.6z" fill="#333" stroke="#ddd" stroke-width="1"/><rect x="1.6" y="2.2" width="6" height="6" fill="#e8c020"/><path d="M1.6 4.2h6M1.6 6.2h6M3.6 2.2v6M5.6 2.2v6" stroke="#7a6000" stroke-width=".5"/></svg>
<div class="t" style="font-size:7.6px;left:83.0px;top:149.1px;">2 BACS function list VDI 3814 Part 4.3</div>
<svg class="a" style="left:59.0px;top:160.6px" width="11" height="10"><rect x="0" y="0" width="11" height="10" fill="#f6ca30"/><rect x=".4" y=".4" width="10.2" height="9.2" fill="none" stroke="#fff6c8" stroke-width=".8" stroke-dasharray="1 1"/><path d="M2 3.8h7M2 6.2h7" stroke="#6a4800" stroke-width="1"/></svg>
<div class="t" style="font-size:7.6px;left:71.8px;top:160.4px;">RLT01 (Ventilation system 01)</div>
<svg class="a" style="left:49.0px;top:161.4px" width="7" height="8"><path d="M1.5 1v6l4-3z" fill="#2b2b2b" stroke="#555" stroke-width=".7"/></svg>
<svg class="a" style="left:25.3px;top:171.9px" width="11" height="10"><rect x="0" y="0" width="11" height="10" fill="#ff8a10"/><rect x=".4" y=".4" width="10.2" height="9.2" fill="none" stroke="#fff3d8" stroke-width=".8" stroke-dasharray="1 1"/><path d="M4 3.2a1.2 1.2 0 1 1 1.8 1.4L4 6.5a1 1 0 0 0 1.6 1l2-2.2M5.3 5.5l2.2 2.3" fill="none" stroke="#4a2800" stroke-width="1"/></svg>
<div class="t" style="font-size:7.6px;left:38.0px;top:171.7px;">PPF1 (Summarized BACS function list)</div>
<svg class="a" style="left:15.3px;top:172.7px" width="7" height="8"><path d="M1.5 1v6l4-3z" fill="#2b2b2b" stroke="#555" stroke-width=".7"/></svg>
<svg class="a" style="left:25.3px;top:183.2px" width="11" height="10"><rect x="0" y="0" width="11" height="10" fill="#ff8a10"/><rect x=".4" y=".4" width="10.2" height="9.2" fill="none" stroke="#fff3d8" stroke-width=".8" stroke-dasharray="1 1"/><path d="M4 3.2a1.2 1.2 0 1 1 1.8 1.4L4 6.5a1 1 0 0 0 1.6 1l2-2.2M5.3 5.5l2.2 2.3" fill="none" stroke="#4a2800" stroke-width="1"/></svg>
<div class="t" style="font-size:7.6px;left:38.0px;top:183.0px;">EFS (Electrical engineering schematic)</div>
<svg class="a" style="left:15.3px;top:184.0px" width="7" height="8"><path d="M1.5 1v6l4-3z" fill="#2b2b2b" stroke="#555" stroke-width=".7"/></svg>
<svg class="a" style="left:25.3px;top:194.5px" width="11" height="10"><rect x="0" y="0" width="11" height="10" fill="#ff8a10"/><rect x=".4" y=".4" width="10.2" height="9.2" fill="none" stroke="#fff3d8" stroke-width=".8" stroke-dasharray="1 1"/><path d="M4 3.2a1.2 1.2 0 1 1 1.8 1.4L4 6.5a1 1 0 0 0 1.6 1l2-2.2M5.3 5.5l2.2 2.3" fill="none" stroke="#4a2800" stroke-width="1"/></svg>
<div class="t" style="font-size:7.6px;left:38.0px;top:194.3px;">EMA1 (Terminal-strip overview)</div>
<svg class="a" style="left:15.3px;top:195.3px" width="7" height="8"><path d="M1.5 1v6l4-3z" fill="#2b2b2b" stroke="#555" stroke-width=".7"/></svg>
<svg class="a" style="left:25.3px;top:205.7px" width="11" height="10"><rect x="0" y="0" width="11" height="10" fill="#ff8a10"/><rect x=".4" y=".4" width="10.2" height="9.2" fill="none" stroke="#fff3d8" stroke-width=".8" stroke-dasharray="1 1"/><path d="M4 3.2a1.2 1.2 0 1 1 1.8 1.4L4 6.5a1 1 0 0 0 1.6 1l2-2.2M5.3 5.5l2.2 2.3" fill="none" stroke="#4a2800" stroke-width="1"/></svg>
<div class="t" style="font-size:7.6px;left:38.0px;top:205.5px;">EMA2 (Terminal diagram)</div>
<svg class="a" style="left:15.3px;top:206.5px" width="7" height="8"><path d="M1.5 1v6l4-3z" fill="#2b2b2b" stroke="#555" stroke-width=".7"/></svg>
<svg class="a" style="left:25.3px;top:217.0px" width="11" height="10"><rect x="0" y="0" width="11" height="10" fill="#ff8a10"/><rect x=".4" y=".4" width="10.2" height="9.2" fill="none" stroke="#fff3d8" stroke-width=".8" stroke-dasharray="1 1"/><path d="M4 3.2a1.2 1.2 0 1 1 1.8 1.4L4 6.5a1 1 0 0 0 1.6 1l2-2.2M5.3 5.5l2.2 2.3" fill="none" stroke="#4a2800" stroke-width="1"/></svg>
<div class="t" style="font-size:7.6px;left:38.0px;top:216.8px;">EMB1 (Cable overview)</div>
<svg class="a" style="left:15.3px;top:217.8px" width="7" height="8"><path d="M1.5 1v6l4-3z" fill="#2b2b2b" stroke="#555" stroke-width=".7"/></svg>
<svg class="a" style="left:25.3px;top:228.3px" width="11" height="10"><rect x="0" y="0" width="11" height="10" fill="#ff8a10"/><rect x=".4" y=".4" width="10.2" height="9.2" fill="none" stroke="#fff3d8" stroke-width=".8" stroke-dasharray="1 1"/><path d="M4 3.2a1.2 1.2 0 1 1 1.8 1.4L4 6.5a1 1 0 0 0 1.6 1l2-2.2M5.3 5.5l2.2 2.3" fill="none" stroke="#4a2800" stroke-width="1"/></svg>
<div class="t" style="font-size:7.6px;left:38.0px;top:228.1px;">EMB2 (Cable diagram)</div>
<svg class="a" style="left:15.3px;top:229.1px" width="7" height="8"><path d="M1.5 1v6l4-3z" fill="#2b2b2b" stroke="#555" stroke-width=".7"/></svg>
<svg class="a" style="left:25.3px;top:239.6px" width="11" height="10"><rect x="0" y="0" width="11" height="10" fill="#ff8a10"/><rect x=".4" y=".4" width="10.2" height="9.2" fill="none" stroke="#fff3d8" stroke-width=".8" stroke-dasharray="1 1"/><path d="M4 3.2a1.2 1.2 0 1 1 1.8 1.4L4 6.5a1 1 0 0 0 1.6 1l2-2.2M5.3 5.5l2.2 2.3" fill="none" stroke="#4a2800" stroke-width="1"/></svg>
<div class="t" style="font-size:7.6px;left:38.0px;top:239.4px;">EPB (Parts lists)</div>
<svg class="a" style="left:15.3px;top:240.4px" width="7" height="8"><path d="M1.5 1v6l4-3z" fill="#2b2b2b" stroke="#555" stroke-width=".7"/></svg>
<svg class="a" style="left:25.3px;top:250.9px" width="11" height="10"><rect x="0" y="0" width="11" height="10" fill="#ff8a10"/><rect x=".4" y=".4" width="10.2" height="9.2" fill="none" stroke="#fff3d8" stroke-width=".8" stroke-dasharray="1 1"/><path d="M4 3.2a1.2 1.2 0 1 1 1.8 1.4L4 6.5a1 1 0 0 0 1.6 1l2-2.2M5.3 5.5l2.2 2.3" fill="none" stroke="#4a2800" stroke-width="1"/></svg>
<div class="t" style="font-size:7.6px;left:38.0px;top:250.7px;">EPC1 (Summarized parts list)</div>
<svg class="a" style="left:15.3px;top:251.7px" width="7" height="8"><path d="M1.5 1v6l4-3z" fill="#2b2b2b" stroke="#555" stroke-width=".7"/></svg>
<svg class="a" style="left:25.3px;top:262.1px" width="11" height="10"><rect x="0" y="0" width="11" height="10" fill="#ff8a10"/><rect x=".4" y=".4" width="10.2" height="9.2" fill="none" stroke="#fff3d8" stroke-width=".8" stroke-dasharray="1 1"/><path d="M4 3.2a1.2 1.2 0 1 1 1.8 1.4L4 6.5a1 1 0 0 0 1.6 1l2-2.2M5.3 5.5l2.2 2.3" fill="none" stroke="#4a2800" stroke-width="1"/></svg>
<div class="t" style="font-size:7.6px;left:38.0px;top:261.9px;">ETC1 (Model view)</div>
<svg class="a" style="left:15.3px;top:262.9px" width="7" height="8"><path d="M1.5 1v6l4-3z" fill="#2b2b2b" stroke="#555" stroke-width=".7"/></svg>
</div>
<!-- canvas area -->
<div class="a" style="left:240px;top:105px;width:880px;height:19px;background:#262626"></div>
<!--CANVAS--><svg class="a" style="left:245px;top:125px" width="707" height="555" viewBox="245 125 707 555" font-family="Liberation Sans">
<rect x="245" y="125" width="707" height="555" fill="#fff"/>
<polyline points="245,134.5 307.5,134.5 307.5,125" fill="none" stroke="#000" stroke-width="2.2" />
<line x1="245" y1="190" x2="951" y2="190" stroke="#737373" stroke-width="2.2"/>
<line x1="245" y1="200.5" x2="951" y2="200.5" stroke="#737373" stroke-width="2.2"/>
<line x1="245" y1="632.7" x2="951" y2="632.7" stroke="#737373" stroke-width="2.2"/>
<line x1="245" y1="643.3" x2="951" y2="643.3" stroke="#737373" stroke-width="2.2"/>
<line x1="245" y1="186.6" x2="429" y2="186.6" stroke="#15878a" stroke-width="1.5" stroke-dasharray="12 2 1.5 2"/>
<line x1="429" y1="125" x2="429" y2="186.6" stroke="#15878a" stroke-width="1.5" stroke-dasharray="12 2 1.5 2"/>
<line x1="408" y1="214" x2="951" y2="214" stroke="#15878a" stroke-width="1.5" stroke-dasharray="12 2 1.5 2"/>
<line x1="408" y1="214" x2="408" y2="632.5" stroke="#15878a" stroke-width="1.5" stroke-dasharray="12 2 1.5 2"/>
<line x1="408" y1="632.9" x2="951" y2="632.9" stroke="#15807f" stroke-width="2.2"/>
<line x1="674" y1="339" x2="951" y2="339" stroke="#15878a" stroke-width="1.5" stroke-dasharray="12 2 1.5 2"/>
<line x1="674" y1="339" x2="674" y2="626" stroke="#15878a" stroke-width="1.5" stroke-dasharray="12 2 1.5 2"/>
<line x1="674" y1="626" x2="951" y2="626" stroke="#15878a" stroke-width="1.5" stroke-dasharray="12 2 1.5 2"/>
<line x1="840.5" y1="339" x2="840.5" y2="626" stroke="#15878a" stroke-width="1.5" stroke-dasharray="12 2 1.5 2"/>
<line x1="321.5" y1="125" x2="321.5" y2="680" stroke="#f6b300" stroke-width="1.8"/>
<line x1="335" y1="125" x2="335" y2="680" stroke="#f6b300" stroke-width="1.8"/>
<line x1="349" y1="125" x2="349" y2="680" stroke="#f6b300" stroke-width="1.8"/>
<polyline points="363,125 363,674 494,674 494,680" fill="none" stroke="#f6b300" stroke-width="1.8" />
<polyline points="377,125 377,660.7 951,660.7" fill="none" stroke="#f6b300" stroke-width="1.8" />
<polyline points="404.3,125 404.3,238 951,238" fill="none" stroke="#f6b300" stroke-width="1.8" />
<polyline points="390.6,125 390.6,252 497.5,252 497.5,392" fill="none" stroke="#2b8793" stroke-width="3.4" />
<polyline points="514.8,387 514.8,321.6 951,321.6" fill="none" stroke="#27c427" stroke-width="1.3" />
<polyline points="535.4,387 535.4,327.8 951,327.8" fill="none" stroke="#309a30" stroke-width="1.3" />
<line x1="702" y1="321.6" x2="702" y2="369" stroke="#27c427" stroke-width="1.3"/>
<line x1="882" y1="321.6" x2="882" y2="369" stroke="#27c427" stroke-width="1.3"/>
<line x1="823.3" y1="321.6" x2="823.3" y2="477" stroke="#27c427" stroke-width="1.3"/>
<polyline points="812.3,327.8 812.3,383.5 799,383.5 795,388" fill="none" stroke="#309a30" stroke-width="1.3" />
<polyline points="715,383.5 789,383.5 795,388" fill="none" stroke="#27c427" stroke-width="1.3" />
<polyline points="712.5,388 716,383.5" fill="none" stroke="#27c427" stroke-width="1.3" />
<polyline points="892.5,388 896,383.5 951,383.5" fill="none" stroke="#27c427" stroke-width="1.3" />
<line x1="629.2" y1="310.4" x2="629.2" y2="321.7" stroke="#1212ff" stroke-width="2"/>
<line x1="778" y1="307" x2="778" y2="328" stroke="#1212ff" stroke-width="2"/>
<rect x="389.1" y="182.0" width="3" height="3" fill="#fff" stroke="#ee1111" stroke-width="1.3"/>
<rect x="388.35" y="249.75" width="4.5" height="4.5" fill="#fff" stroke="#ee1111" stroke-width="1.3"/>
<rect x="442.5" y="250.5" width="3" height="3" fill="#fff" stroke="#ee1111" stroke-width="1.3"/>
<rect x="495.25" y="249.75" width="4.5" height="4.5" fill="#fff" stroke="#ee1111" stroke-width="1.3"/>
<rect x="496.0" y="321.5" width="3" height="3" fill="#fff" stroke="#ee1111" stroke-width="1.3"/>
<text x="273.4" y="225.2" font-size="10.8" font-weight="bold" fill="#1818e8" textLength="38.8" lengthAdjust="spacingAndGlyphs">BACnet</text>
<text x="430.8" y="223" font-size="7.6" fill="#2020e8" stroke="#2020e8" stroke-width=".25" textLength="22.2" lengthAdjust="spacingAndGlyphs">RAE01</text>
<text x="420" y="232" font-size="7.6" fill="#2020e8" stroke="#2020e8" stroke-width=".25" textLength="33" lengthAdjust="spacingAndGlyphs">==RAE01</text>
<text x="522.3" y="315.2" font-size="10.8" font-weight="bold" fill="#1818e8" textLength="22.5" lengthAdjust="spacingAndGlyphs">KNX</text>
<text x="546.7" y="347" font-size="10.5" font-weight="bold" fill="#111" textLength="25.5" lengthAdjust="spacingAndGlyphs">DALI</text>
<rect x="412.6" y="325.4" width="74.6" height="9.3" fill="#fff" stroke="#5aa0cc" stroke-width="1"/>
<rect x="437.5" y="335" width="49.7" height="9.3" fill="#fff" stroke="#5aa0cc" stroke-width="1"/>
<rect x="469" y="344.5" width="18.2" height="9" fill="#fff" stroke="#5aa0cc" stroke-width="1"/>
<text x="413.5" y="333.2" font-size="8" fill="#1f4cbc" stroke="#1f4cbc" stroke-width=".2" textLength="73" lengthAdjust="spacingAndGlyphs">GEB01 MMBE WGB05</text>
<text x="438.5" y="342.8" font-size="8" fill="#1f4cbc" stroke="#1f4cbc" stroke-width=".2" textLength="48" lengthAdjust="spacingAndGlyphs">LAPP.2170634</text>
<text x="470.4" y="352.2" font-size="8" fill="#1f4cbc" stroke="#1f4cbc" stroke-width=".2" textLength="16" lengthAdjust="spacingAndGlyphs">25 m</text>
<line x1="432" y1="335.3" x2="501" y2="335.3" stroke="#333" stroke-width="1"/>
<text x="615.4000000000001" y="282.9" font-size="7.5" fill="#222" textLength="13.8" lengthAdjust="spacingAndGlyphs">-W2</text>
<text x="572.9" y="289.8" font-size="5" fill="#333" textLength="56.3" lengthAdjust="spacingAndGlyphs">UNITRONIC® BUS EIB</text>
<text x="617.2" y="296.7" font-size="5" fill="#333" textLength="12" lengthAdjust="spacingAndGlyphs">10 m</text>
<text x="616.2" y="303.6" font-size="5" fill="#333" textLength="13" lengthAdjust="spacingAndGlyphs">4x0,8</text>
<text x="615.2" y="310.5" font-size="5" fill="#333" textLength="14" lengthAdjust="spacingAndGlyphs">250 V</text>
<text x="764.8" y="271.6" font-size="7.5" fill="#222" textLength="13.2" lengthAdjust="spacingAndGlyphs">-W4</text>
<text x="702.8" y="279.1" font-size="5" fill="#333" textLength="75.2" lengthAdjust="spacingAndGlyphs">UNITRONIC® BUS COMBI EIB</text>
<text x="762.9" y="286.0" font-size="5" fill="#333" textLength="15.1" lengthAdjust="spacingAndGlyphs">120 m</text>
<text x="764.6" y="292.9" font-size="5" fill="#333" textLength="13.4" lengthAdjust="spacingAndGlyphs">7x1,5</text>
<text x="764.0" y="299.8" font-size="5" fill="#333" textLength="14" lengthAdjust="spacingAndGlyphs">250 V</text>
<text x="739.8" y="306.7" font-size="5" fill="#333" textLength="38.2" lengthAdjust="spacingAndGlyphs">Dali control line</text>
<text x="751.6" y="348.3" font-size="8.4" fill="#111" textLength="21.2" lengthAdjust="spacingAndGlyphs">RA001</text>
<text x="728.7" y="357.6" font-size="8.4" fill="#111" textLength="66.6" lengthAdjust="spacingAndGlyphs">Segment 1 (DEMO)</text>
<text x="917.3" y="348.3" font-size="8.4" fill="#111" textLength="21.2" lengthAdjust="spacingAndGlyphs">RA002</text>
<text x="894.5" y="357.6" font-size="8.4" fill="#111" textLength="66.6" lengthAdjust="spacingAndGlyphs">Segment 2 (DEMO)</text>
<g stroke="#666" stroke-width=".7" fill="#e8e8e8"><rect x="692.5" y="366.5" width="7" height="8.5" rx="1.5"/><rect x="704.5" y="366.5" width="7" height="8.5" rx="1.5"/><path d="M692.5 370.5h19M696 366.5v8.5M708 366.5v8.5" fill="none" stroke="#999"/><circle cx="702" cy="370.5" r="3.2" fill="#ddd" stroke="#333" stroke-width=".9"/><circle cx="702" cy="370.5" r="1.2" fill="none" stroke="#555" stroke-width=".6"/><path d="M696 376.5h12" stroke="#777"/></g>
<rect x="710.2" y="373.5" width="96.39999999999998" height="5.4" rx="2.7" fill="#72b6f6"/><text x="728.2" y="377.9" font-size="5.2" fill="#2a2a55" textLength="52" lengthAdjust="spacingAndGlyphs">Heating- Cooling ceiling</text>
<circle cx="712.2" cy="391.7" r="4.5" fill="#f2f27a" stroke="#333" stroke-width=".9"/><path d="M709.0 388.5l6.4 6.4M715.4000000000001 388.5l-6.4 6.4" stroke="#222" stroke-width=".8"/><path d="M716.2 395.7h2" stroke="#222" stroke-width="1.2"/>
<circle cx="794.9" cy="391.7" r="4.5" fill="#f2f27a" stroke="#333" stroke-width=".9"/><path d="M791.6999999999999 388.5l6.4 6.4M798.1 388.5l-6.4 6.4" stroke="#222" stroke-width=".8"/><path d="M798.9 395.7h2" stroke="#222" stroke-width="1.2"/>
<g stroke="#666" stroke-width=".7" fill="#e8e8e8"><rect x="872.5" y="366.5" width="7" height="8.5" rx="1.5"/><rect x="884.5" y="366.5" width="7" height="8.5" rx="1.5"/><path d="M872.5 370.5h19M876 366.5v8.5M888 366.5v8.5" fill="none" stroke="#999"/><circle cx="882" cy="370.5" r="3.2" fill="#ddd" stroke="#333" stroke-width=".9"/><circle cx="882" cy="370.5" r="1.2" fill="none" stroke="#555" stroke-width=".6"/><path d="M876 376.5h12" stroke="#777"/></g>
<rect x="890" y="373.5" width="70" height="5.4" rx="2.7" fill="#72b6f6"/><text x="908" y="377.9" font-size="5.2" fill="#2a2a55" textLength="52" lengthAdjust="spacingAndGlyphs">Heating- Cooling ceiling</text>
<circle cx="892.2" cy="391.7" r="4.5" fill="#f2f27a" stroke="#333" stroke-width=".9"/><path d="M889.0 388.5l6.4 6.4M895.4000000000001 388.5l-6.4 6.4" stroke="#222" stroke-width=".8"/><path d="M896.2 395.7h2" stroke="#222" stroke-width="1.2"/>
<rect x="817.5" y="477" width="11" height="19.5" fill="#eee" stroke="#666" stroke-width="1"/><path d="M820.5 479.5v6M825.5 479.5v6" stroke="#555" stroke-width="1.1"/><rect x="820" y="488" width="6" height="6" fill="none" stroke="#555" stroke-width=".8"/><circle cx="823" cy="491" r="1.2" fill="#555"/>
<text x="441.3" y="383.2" font-size="7.6" fill="#222" textLength="24.4" lengthAdjust="spacingAndGlyphs">BVT1.1</text>
<rect x="444" y="389" width="104" height="218.5" fill="#d9d9d9" stroke="#a8a8a8" stroke-width="3"/>
<rect x="442.5" y="607" width="107" height="22" fill="#000"/>
<rect x="442.5" y="387.5" width="107" height="241.5" fill="none" stroke="#2233ee" stroke-width="2.2" stroke-dasharray="10 10.5" stroke-dashoffset="-1"/>
<line x1="497.5" y1="385" x2="497.5" y2="392" stroke="#2b8793" stroke-width="3.4"/>
<rect x="495.25" y="391.75" width="4.5" height="4.5" fill="#fff" stroke="#ee1111" stroke-width="1.3"/>
<rect x="488" y="437" width="16" height="18.5" fill="#9a9a9a" stroke="#888" stroke-width="1"/><rect x="490.5" y="439.5" width="11" height="10" fill="#cfcfcf"/><path d="M491 452.5h2M494.5 452.5h2M498 452.5h2" stroke="#ddd" stroke-width="1.2"/>
<rect x="447" y="475" width="6" height="30" fill="#999"/><circle cx="450" cy="488" r="2.2" fill="#000"/>
<circle cx="484.5" cy="525.8" r="2.1" fill="#f4b400" stroke="#b07a00" stroke-width=".5"/>
<circle cx="495.3" cy="525.8" r="2.1" fill="#f4b400" stroke="#b07a00" stroke-width=".5"/>
<circle cx="506" cy="525.8" r="2.1" fill="#f4b400" stroke="#b07a00" stroke-width=".5"/>
<rect x="490.5" y="535.5" width="9" height="9" fill="#f4d000" stroke="#555" stroke-width=".6"/><circle cx="495" cy="540" r="3.3" fill="#e82020"/><path d="M492 540h6" stroke="#222" stroke-width="1.1"/>
<rect x="485.5" y="565.5" width="20" height="17" fill="#e5e5e5" stroke="#777" stroke-width="1"/><rect x="488" y="568" width="15" height="12" fill="#ddd" stroke="#666" stroke-width=".6"/><path d="M488 570.5h15M488 573h15M488 575.5h15M488 578h15" stroke="#666" stroke-width=".7"/>
</svg><!--/CANVAS-->
<div class="a" style="left:244px;top:123px;width:709px;height:1px;background:#303030"></div><div class="a" style="left:244px;top:124px;width:709px;height:2px;background:#1c1c1c"></div>
<div class="a" style="left:952px;top:124px;width:4px;height:556px;background:#2a2a2a"></div>
<div class="a" style="left:244px;top:680px;width:870px;height:17px;background:#444"></div>
<!-- insert center -->
<div class="a" style="left:956px;top:124px;width:158px;height:455px;background:#333"></div>
<div class="a" style="left:956px;top:578px;width:158px;height:4px;background:#282828"></div><div class="a" style="left:956px;top:582px;width:158px;height:3px;background:#3c3c3c"></div>
<div class="a" style="left:956px;top:585px;width:158px;height:95px;background:#262626"></div>
<div class="a" style="left:1114px;top:105px;width:6px;height:592px;background:#2b2b2b;border-left:2px solid #404040"></div>
<!-- property overview -->
<div class="a" style="left:1120px;top:105px;width:160px;height:592px;background:#333"></div>
<div class="a" style="left:1120px;top:621px;width:157px;height:5px;background:#282828"></div><div class="a" style="left:1120px;top:626px;width:157px;height:3px;background:#3c3c3c"></div><div class="a" style="left:1120px;top:629px;width:157px;height:6px;background:#292929"></div>
<div class="a" style="left:1120px;top:635px;width:157px;height:62px;background:#262626;border-top:1px solid #505050"></div>

<!-- canvas tab -->
<div class="a" style="left:240px;top:105px;width:875px;height:2px;background:#333"></div>
<div class="t" style="left:249px;top:110px;color:#1ea6f2;font-size:7.7px;font-weight:bold">++GEB01&amp;PFB/1</div>
<svg class="a" style="left:317px;top:110px" width="10" height="10"><path d="M2 2l6 6M8 2l-6 6" stroke="#ccc" stroke-width="1.1"/></svg>
<div class="a" style="left:243px;top:122px;width:85px;height:2px;background:#1a8fdc"></div>
<div class="a" style="left:1101px;top:108px;width:13px;height:13px;background:#333"></div>
<svg class="a" style="left:1102px;top:111px" width="10" height="8"><path d="M1.5 2h7L5 6z" fill="#999"/></svg>
<!-- status bar -->
<div class="t" style="left:250px;top:684px;color:#ddd">X: 157,94 mm Y: 478,59 mm</div>
<svg class="a" style="left:854px;top:682px" width="58" height="13">
<path d="M2 10h9v-3H2z" fill="none" stroke="#ccc" stroke-width=".9"/><path d="M5 8l6-6" stroke="#1ba0ea" stroke-width="1.1"/>
<path d="M17 11V5a3 3 0 0 1 6 0v6M16 11h2M22 11h2" fill="none" stroke="#eee" stroke-width="1.3"/><path d="M16 12l1.5-2" stroke="#1ba0ea"/>
<rect x="28" y="0" width="12" height="13" fill="#353535"/><path d="M30 11V5a3 3 0 0 1 6 0v6" fill="none" stroke="#eee" stroke-width="1.3"/><path d="M38 6v1M38 9v1M38 12v1M34 12h1M31 12h1" stroke="#aaa"/>
<path d="M50 2v9M45.5 6.5h9" stroke="#1ba0ea" stroke-width="1.2"/><circle cx="50" cy="6.5" r="2.5" fill="none" stroke="#1ba0ea"/>
</svg>
<svg class="a" style="left:918px;top:683px" width="28" height="11"><g fill="#bbb"><rect x="1" y="1" width="1.2" height="1.2"/><rect x="4" y="1" width="1.2" height="1.2"/><rect x="7" y="1" width="1.2" height="1.2"/><rect x="1" y="4" width="1.2" height="1.2"/><rect x="4" y="4" width="1.2" height="1.2"/><rect x="7" y="4" width="1.2" height="1.2"/><rect x="1" y="7" width="1.2" height="1.2"/><rect x="4" y="7" width="1.2" height="1.2"/><rect x="7" y="7" width="1.2" height="1.2"/></g><path d="M19 5l2 2 2-2" fill="none" stroke="#666" stroke-width=".8"/></svg>
<div class="t" style="left:954px;top:684px;color:#ddd">Grid A: 1,00 mm</div>
<div class="t" style="left:1023px;top:684px;color:#ddd">Graphic 1:1,50</div>
<svg class="a" style="left:1086px;top:682px" width="28" height="13"><circle cx="6" cy="5.5" r="4" fill="none" stroke="#bbb" stroke-width="1"/><path d="M9 8.5l3 3" stroke="#bbb" stroke-width="1.2"/><path d="M3.5 11h5" stroke="#1ba0ea" stroke-width="1"/><circle cx="20" cy="5.5" r="4" fill="none" stroke="#bbb" stroke-width="1"/><path d="M23 8.5l3 3" stroke="#bbb" stroke-width="1.2"/><path d="M17.5 11h5" stroke="#1ba0ea" stroke-width="1"/></svg>
<!-- insert center -->
<div class="t" style="left:959px;top:129px">Insert center (IEC)</div>
<svg class="a" style="left:1087px;top:128px" width="26" height="12"><path d="M2 4.5h6L5 8z" fill="#ccc"/><path d="M15.5 2.5h4v4h-4zM14.5 6.5h6M17.5 6.5v3" fill="none" stroke="#ccc" stroke-width=".9"/></svg>
<svg class="a" style="left:957px;top:144px" width="14" height="14"><path d="M1.5 1.5h10v10h-10zM1.5 4h10M4 4v7.5M6.5 4v7.5" fill="none" stroke="#ccc" stroke-width=".9"/><circle cx="9.5" cy="9.5" r="2" fill="#333" stroke="#1ba0ea" stroke-width="1"/><path d="M11 11l2 2" stroke="#1ba0ea" stroke-width="1"/></svg>
<div class="a" style="left:973px;top:144px;width:121px;height:14px;background:#2c2c2c;border:1px solid #4a4a4a"></div>
<div class="t" style="left:978px;top:146px;color:#888">Find</div>
<svg class="a" style="left:1080px;top:145px" width="12" height="12"><circle cx="7" cy="5" r="3.3" fill="none" stroke="#1b90d8" stroke-width="1.2"/><path d="M4.6 7.4L1.5 10.5" stroke="#1b90d8" stroke-width="1.5"/></svg>
<div class="a" style="left:1096px;top:144px;width:17px;height:15px;background:#2e2e2e"></div>
<div class="t" style="left:1100px;top:146px">...</div>
<div class="a" style="left:956px;top:159px;width:158px;height:6px;background:#252525"></div>
<div class="a" style="left:957px;top:166px;width:15px;height:16px;background:#2e2e2e"></div>
<svg class="a" style="left:959px;top:169px" width="11" height="10"><path d="M1.5 5L5.5 1.5 9.5 5M2.5 4.5V9h6V4.5" fill="none" stroke="#999" stroke-width=".9"/></svg>
<div class="a" style="left:975px;top:166px;width:15px;height:16px;background:#2e2e2e"></div>
<svg class="a" style="left:978px;top:170px" width="10" height="8"><path d="M8.5 4h-7M4 1.5L1.5 4 4 6.5" fill="none" stroke="#888" stroke-width=".9"/></svg>
<div class="a" style="left:993px;top:166px;width:120px;height:16px;background:#2a2a2a;border:1px solid #474747"></div>
<div class="t" style="left:998px;top:169px;color:#eee;font-size:8px">Home</div>
<svg class="a" style="left:1024px;top:170px" width="6" height="8"><path d="M1 1v6l4-3z" fill="#eee"/></svg>
<div class="a" style="left:960px;top:227px;width:150px;height:20px;background:#575757"></div>
<svg class="a" style="left:955px;top:185px" width="24" height="142">
<g fill="none" stroke="#e6e6e6" stroke-width="1.1">
<circle cx="13.3" cy="12.1" r="6.1"/><path d="M12.6 8.3v4.3h3.3"/>
<path d="M8.7 48v11l4.5-3.2 4.5 3.2V48l-4.5-3.5z"/><circle cx="13.2" cy="49.5" r="1.1"/>
<rect x="9" y="68.5" width="9.5" height="6.8"/>
<path d="M7 86.5h2.2l2 9h8.5l1.5-6.5H10"/><path d="M11.5 91.5h9"/>
<rect x="11" y="108" width="5.5" height="5.5"/>
<path d="M10.5 124.5h6v13.5h-6z"/><path d="M12 127h3M12 129h3"/><rect x="11.8" y="131" width="3.4" height="5"/>
</g>
<path transform="translate(0,4.3)" d="M13.5 21.5l1.7 4.6 4.9.2-3.9 3 1.4 4.7-4.1-2.8-4.1 2.8 1.4-4.7-3.9-3 4.9-.2z" fill="#f2f2f2"/>
<circle cx="11" cy="97.5" r="1.3" fill="#e6e6e6"/><circle cx="18.5" cy="97.5" r="1.3" fill="#e6e6e6"/>
<g fill="#c02030"><rect x="11.5" y="64.5" width="1" height="4"/><rect x="15" y="64.5" width="1" height="4"/><rect x="11.5" y="75.3" width="1" height="4"/><rect x="15" y="75.3" width="1" height="4"/>
<rect x="11" y="105.5" width="1.5" height="1.5"/><rect x="15" y="105.5" width="1.5" height="1.5"/><rect x="11" y="114.5" width="1.5" height="1.5"/><rect x="15" y="114.5" width="1.5" height="1.5"/></g>
<g fill="#1aa6f0"><rect x="5.5" y="103.5" width="3.5" height="3.5"/><rect x="18" y="103.5" width="3.5" height="3.5"/><rect x="5.5" y="115" width="3.5" height="3.5"/><rect x="18" y="115" width="3.5" height="3.5"/></g>
</svg>
<div class="t" style="left:979px;top:193.3px">Recent</div>
<div class="t" style="left:979px;top:212.7px">Favorites</div>
<div class="t" style="left:979px;top:232.6px">Tags</div>
<div class="t" style="left:979px;top:252.6px">Symbols</div>
<div class="t" style="left:979px;top:272.6px">Devices</div>
<div class="t" style="left:979px;top:287px">Window macros / symbol</div>
<div class="t" style="left:979px;top:297px">macros</div>
<div class="t" style="left:979px;top:312.2px">Data Portal</div>
<svg class="a" style="left:1083px;top:309px" width="15" height="15"><circle cx="7.5" cy="7.5" r="6.3" fill="none" stroke="#ddd" stroke-width="1"/><text x="5.2" y="10.3" font-size="7.5" fill="#eee" font-family="Liberation Sans">0</text></svg>
<!-- property overview -->
<div class="t" style="left:1122px;top:110.5px">Property overview</div>
<svg class="a" style="left:1240px;top:109.5px" width="38" height="12"><path d="M2 4.5h6L5 8z" fill="#ccc"/><path d="M15.5 2.5h4v4h-4zM14.5 6.5h6M17.5 6.5v3" fill="none" stroke="#ccc" stroke-width=".9"/><path d="M28 3l5 5M33 3l-5 5" stroke="#ccc" stroke-width="1.1"/></svg>
<div class="a" style="left:1120px;top:124px;width:157px;height:16px;background:#2c2c2c"></div>
<div class="a" style="left:1121px;top:125px;width:15px;height:14px;border:1px solid #aaa;background:#3a3a3a"></div>
<svg class="a" style="left:1122px;top:127px" width="13" height="10"><path d="M2 1.5h4M3 1.5v6h3M7 3.5h4M7 7.5h4" fill="none" stroke="#eee" stroke-width="1.1"/></svg>
<svg class="a" style="left:1137px;top:126px" width="12" height="12"><path d="M2 2.5h7M2 4.5h7M2 6.5h7M2 8.5h7M2 10.5h7" stroke="#999" stroke-width=".8"/></svg>
<div class="a" style="left:1160px;top:124px;width:1px;height:16px;background:#3a3a3a"></div>
<svg class="a" style="left:1163px;top:127px" width="10" height="10"><path d="M1.5 7V1.5h3M3.5 3h3l2 2v4h-5z" fill="none" stroke="#ccc" stroke-width=".9"/><rect x="5" y="6" width="2.5" height="2.5" fill="#3c3"/></svg>
<svg class="a" style="left:1180px;top:127px" width="10" height="10"><path d="M1 1h3v6H1zM4 3h4v6H4z" fill="#ccc"/><rect x="5" y="6" width="2.5" height="2.5" fill="#3c3"/></svg>
<div class="a" style="left:1195px;top:125px;width:16px;height:14px;border:1px solid #aaa;background:#3a3a3a"></div>
<svg class="a" style="left:1197px;top:127px" width="12" height="10"><circle cx="5" cy="3" r="1.8" fill="none" stroke="#eee"/><path d="M1.5 8.5a3.5 3 0 0 1 7 0M7 6h4M7 8h4" fill="none" stroke="#eee"/></svg>
<div class="a" style="left:1217px;top:124px;width:35px;height:16px;background:#3c3c3c"></div>
<div class="a" style="left:1241px;top:124px;width:11px;height:16px;background:#4a4a4a"></div>
<div class="t" style="left:1220px;top:127px">Defau</div>
<svg class="a" style="left:1243px;top:130px" width="7" height="5"><path d="M1 1h5L3.5 4z" fill="#ccc"/></svg>
<div class="a" style="left:1259px;top:124px;width:18px;height:16px;background:#2e2e2e"></div>
<div class="t" style="left:1264px;top:128px">...</div>
<div class="a" style="left:1120px;top:144px;width:157px;height:14px;background:#2c2c2c;border:1px solid #4a4a4a"></div>
<div class="t" style="left:1125px;top:146px;color:#888">Find</div>
<svg class="a" style="left:1263px;top:145px" width="12" height="12"><circle cx="7" cy="5" r="3.3" fill="none" stroke="#1b90d8" stroke-width="1.2"/><path d="M4.6 7.4L1.5 10.5" stroke="#1b90d8" stroke-width="1.5"/></svg>
<div class="a" style="left:1120px;top:159px;width:157px;height:7px;background:#292929"></div>
<div class="a" style="left:1120px;top:167px;width:20px;height:14px;background:#333"></div>
<svg class="a" style="left:1128px;top:172px" width="9" height="9"><path d="M8 1v7H1z" fill="#3c3c3c"/></svg>
<div class="a" style="left:1140px;top:167px;width:68px;height:14px;background:#3d3d3d"></div>
<div class="a" style="left:1208px;top:167px;width:69px;height:14px;background:#252525"></div>
<div class="t" style="left:1143px;top:170px;color:#eee">Property</div>
<div class="t" style="left:1211px;top:170px;color:#eee">Value</div>
<div class="a" style="left:1120px;top:181px;width:20px;height:13px;background:#3a3a3a"></div>
<div class="a" style="left:1140px;top:181px;width:137px;height:13px;background:#1e1e1e"></div>
<div class="a" style="left:1140px;top:182px;width:68px;height:12px;border:1px solid #a0a0a0;background:#262626"></div>
<div class="a" style="left:1120px;top:195px;width:157px;height:12px;background:#1e1e1e"></div>
<div class="t" style="left:1128px;top:183px;color:#eee">1</div>
<div class="t" style="left:1128px;top:196px;color:#eee">2</div>
<svg class="a" style="left:1144px;top:184px" width="6" height="8"><path d="M1 1v6l4-3z" fill="none" stroke="#555" stroke-width=".7"/></svg>
<svg class="a" style="left:1144px;top:197px" width="6" height="8"><path d="M1 1v6l4-3z" fill="none" stroke="#555" stroke-width=".7"/></svg>
<div class="t" style="left:1175px;top:183px;color:#eee">Comp...</div>
<div class="t" style="left:1172px;top:196px;color:#eee">Segment</div>
<!-- property description -->
<div class="a" style="left:1263px;top:636px;width:14px;height:61px;background:#303030"></div>
<svg class="a" style="left:1265px;top:638px" width="10" height="8"><path d="M1.5 6h7L5 2z" fill="#bbb"/></svg>
<svg class="a" style="left:1265px;top:687px" width="10" height="8"><path d="M1.5 2h7L5 6z" fill="#bbb"/></svg>
<svg class="a" style="left:1263px;top:700px" width="14" height="14"><path d="M1.5 7v5.5h11V7M7 1.5v7M4.5 6L7 8.5 9.5 6" fill="none" stroke="#ddd" stroke-width="1"/></svg>

<!-- bottom bar -->

</body></html>
